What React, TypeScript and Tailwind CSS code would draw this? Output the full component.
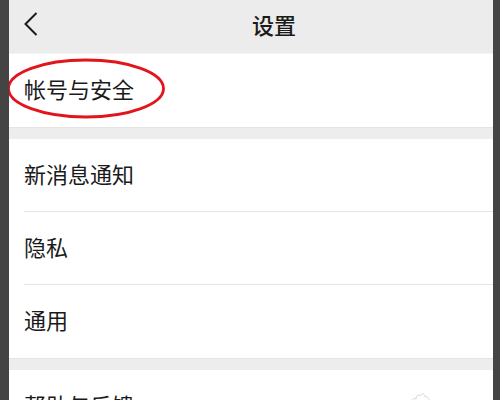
import React from "react";

const font = { fontFamily: '"Noto Sans CJK SC", "Noto Sans", sans-serif' };

function Row({ label, divider }: { label: string; divider?: boolean }) {
  return (
    <div className="bg-white pl-[15px]">
      <div
        className={
          "h-[73px] pb-[5px] flex items-center text-[22px] text-[#1a1a1a] leading-none" +
          (divider ? " border-b border-[#e6e6e6]" : "")
        }
      >
        {label}
      </div>
    </div>
  );
}

export default function App() {
  return (
    <div className="w-[500px] h-[400px] overflow-hidden flex bg-white" style={font}>
      <div className="w-[9px] h-full bg-[#444444] shrink-0" />
      <div className="flex-1 h-full flex flex-col relative overflow-hidden">
        <div className="h-[54px] pb-[6px] shrink-0 bg-[#ececec] border-b border-[#f4f4f4] flex items-center">
          <svg width="14" height="24" viewBox="0 0 14 24" className="ml-[15px]">
            <path d="M12.5 1 L1.5 12 L12.5 23" fill="none" stroke="#1a1a1a" strokeWidth="2" />
          </svg>
          <div className="ml-[214px] text-[22px] leading-none font-medium text-[#1a1a1a]">设置</div>
        </div>
        <div className="relative">
          <Row label="帐号与安全" />
          <svg
            className="absolute left-[-2px] top-[3px] pointer-events-none"
            width="164"
            height="64"
            viewBox="0 0 164 64"
          >
            <ellipse cx="79" cy="31.5" rx="77.5" ry="28.5" fill="none" stroke="#e3141c" strokeWidth="2.8" />
          </svg>
        </div>
        <div className="h-[12px] bg-[#ededed] border-t border-[#e4e4e4] shrink-0" />
        <Row label="新消息通知" divider />
        <Row label="隐私" divider />
        <Row label="通用" />
        <div className="h-[12px] bg-[#ededed] border-t border-[#e4e4e4] shrink-0" />
        <div className="relative">
          <Row label="帮助与反馈" />
          <svg
            className="absolute left-[400px] top-[20px]"
            width="24"
            height="14"
            viewBox="0 0 24 14"
          >
            <path
              d="M2 13 C2 9 5 8 7 9 C7 5 10 4 11 6 C12 3 16 3 16 7 C18 6 21 8 20 13"
              fill="none"
              stroke="#d8d8d8"
              strokeWidth="1"
            />
          </svg>
        </div>
      </div>
      <div className="w-[7px] h-full bg-[#444444] shrink-0" />
    </div>
  );
}
